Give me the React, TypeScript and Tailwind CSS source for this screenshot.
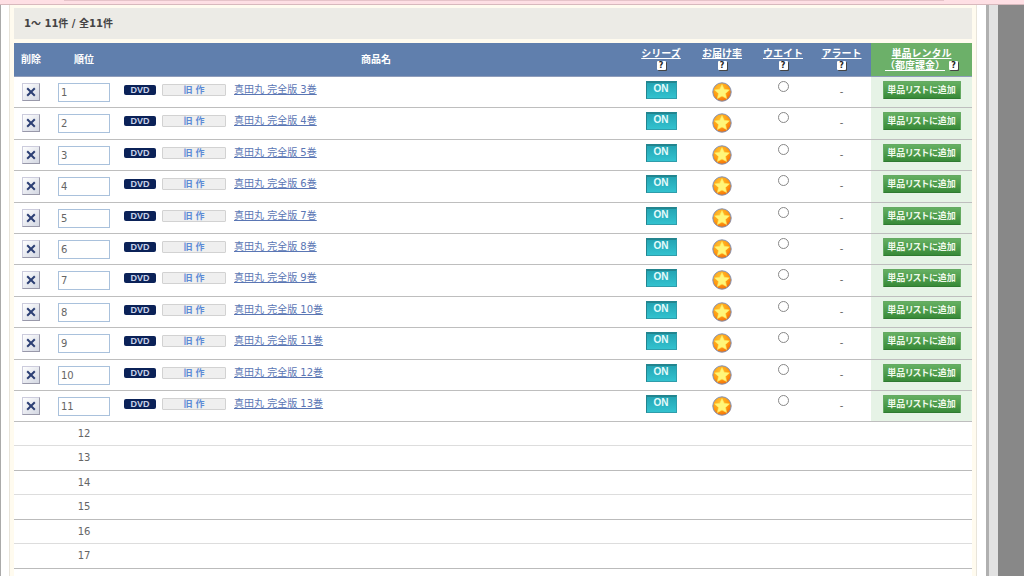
import type { ReactNode } from "react";

interface RentalItem {
  rank: number;
  title: string;
}

const items: RentalItem[] = Array.from({ length: 11 }, (_, i) => ({
  rank: i + 1,
  title: `真田丸 完全版 ${i + 3}巻`,
}));

const emptyRanks = [12, 13, 14, 15, 16, 17, 18];

export default function App() {
  return (
    <div className="flex h-screen flex-col overflow-hidden bg-white font-['DejaVu_Sans','Noto_Sans_CJK_JP',sans-serif] text-[10px] leading-3 text-[#666]">
      <div className="h-[5px] shrink-0 border-b border-[#d8b9bd] bg-[#fedfe4]">
        <div className="mr-20 ml-16 h-px bg-[#e6c3c9]" />
      </div>

      <div className="flex min-h-0 flex-1">
        <div className="min-w-0 flex-1 border-l border-[#aaa] pr-[9px] pl-2">
          <main className="h-full border-x border-[#e8e4da] bg-[#fffbef] px-1 pt-[3px]">
            <p className="mb-1 h-[31px] bg-[#ecebe6] px-[10px] font-bold leading-[31px] text-[#444]">
              1～ 11件 / 全11件
            </p>
            <RentalTable />
          </main>
        </div>
        <div className="w-[3px] bg-[#b0b0b0]" />
        <div className="w-[9px] bg-[#e2e2e2]" />
        <div className="w-[26px] bg-[#888]" />
      </div>
    </div>
  );
}

function RentalTable() {
  return (
    <table className="w-full table-fixed border-separate border-spacing-0 bg-white">
      <colgroup>
        <col className="w-[34px]" />
        <col className="w-[72px]" />
        <col />
        <col className="w-[58px]" />
        <col className="w-16" />
        <col className="w-[58px]" />
        <col className="w-[59px]" />
        <col className="w-[101px]" />
      </colgroup>
      <thead>
        <tr className="h-[34px] bg-[#607fad] text-white *:border-b *:border-[#8f9dbb] *:p-0">
          <th>削除</th>
          <th>順位</th>
          <th>商品名</th>
          <th><HelpHeading>シリーズ</HelpHeading></th>
          <th><HelpHeading>お届け率</HelpHeading></th>
          <th><HelpHeading>ウエイト</HelpHeading></th>
          <th><HelpHeading>アラート</HelpHeading></th>
          <th className="bg-[#6cb069]">
            <a href="#" className="block underline">単品レンタル</a>
            <span className="flex items-center justify-center gap-1">
              <a href="#" className="underline">（都度課金）</a>
              <HelpMark />
            </span>
          </th>
        </tr>
      </thead>
      <tbody>
        {items.map((item) => (
          <ItemRow key={item.rank} item={item} />
        ))}
      </tbody>
      <tbody>
        {emptyRanks.map((rank) => (
          <tr key={rank} className="h-[25px] text-center odd:h-6 *:border-b *:border-[#bbb] *:p-0 odd:*:border-[#ddd]">
            <td />
            <td>{rank}</td>
            <td colSpan={6} />
          </tr>
        ))}
      </tbody>
    </table>
  );
}

function ItemRow({ item }: { item: RentalItem }) {
  return (
    <tr className="h-[31px] text-center align-top nth-[5n+2]:h-8 nth-[5n+4]:h-8 *:border-b *:border-[#bebebe] *:p-0">
      <td>
        <button
          type="button"
          aria-label={`${item.title}を削除`}
          className="mx-auto mt-[6px] flex h-[18px] w-[18px] items-center justify-center border border-t-[#ccd] border-r-[#99a] border-b-[#99a] border-l-[#ccd] bg-linear-to-br from-white to-[#d3d7e2]"
        >
          <svg viewBox="0 0 10 10" className="h-[10px] w-[10px]" stroke="#2c3f74" strokeWidth="2">
            <path d="M1.2 1.2 8.8 8.8M8.8 1.2 1.2 8.8" />
          </svg>
        </button>
      </td>
      <td>
        <input
          type="text"
          aria-label={`${item.title}の順位`}
          defaultValue={item.rank}
          className="mx-auto mt-[6px] block h-[19px] w-[52px] border border-[#a9c1dc] bg-white px-[2px] text-[#666]"
        />
      </td>
      <td>
        <div className="flex h-[26px] items-start pt-1 pl-1">
          <div className="flex h-[18px] items-center">
            <span className="h-[10px] w-8 rounded-[2px] bg-[#0b2258] text-center font-['Liberation_Sans',sans-serif] text-[9px] font-bold leading-[10px] text-[#c9d3ea]">
              DVD
            </span>
            <span className="ml-[6px] h-3 w-16 rounded-[1px] border border-[#d2d2d2] bg-[#efefef] text-center text-[9px] font-bold leading-[10px] text-[#5d8bd6]">
              旧 作
            </span>
            <a href="#" className="ml-2 text-[#5a76b4] underline">
              {item.title}
            </a>
          </div>
        </div>
      </td>
      <td>
        <button
          type="button"
          className="mx-auto mt-1 block h-[18px] w-[31px] border border-t-2 border-[#2f9dab] border-t-[#23858f] border-l-[#23858f] bg-linear-to-b from-[#24a5b4] to-[#33c2cf] font-['Liberation_Sans',sans-serif] text-[10px] font-bold leading-3 text-[#e4fbfb]"
        >
          <span className="block h-[15px]">ON</span>
        </button>
      </td>
      <td>
        <StarIcon />
      </td>
      <td>
        <input
          type="radio"
          name="weight"
          aria-label={`${item.title}のウエイト`}
          className="mx-auto mt-1 block h-[11px] w-[11px] appearance-none rounded-full border border-[#888] bg-white"
        />
      </td>
      <td>
        <div className="pt-[9px]">-</div>
      </td>
      <td className="bg-[#e6f3e6]">
        <button
          type="button"
          className="mx-auto mt-1 block h-[18px] w-[78px] rounded-[1px] border border-[#65aa62] border-b-[#2f7a31] bg-linear-to-b from-[#65b062] to-[#388a38] text-[9px] font-bold leading-4 text-[#f0faec] [font-feature-settings:'palt']"
        >
          単品リストに追加
        </button>
      </td>
    </tr>
  );
}

function HelpHeading({ children }: { children: ReactNode }) {
  return (
    <>
      <a href="#" className="block whitespace-nowrap underline">{children}</a>
      <span className="flex h-3 items-center justify-center">
        <HelpMark />
      </span>
    </>
  );
}

function HelpMark() {
  return (
    <span className="block h-[9px] w-[9px] rounded-[1px] bg-white text-center text-[8px] font-bold leading-[9px] text-[#222] shadow-[1px_1px_0_#444]">
      ?
    </span>
  );
}

function StarIcon() {
  return (
    <svg viewBox="0 0 20 20" className="mx-auto mt-[5px] block h-5 w-5" role="img" aria-label="お届け率">
      <defs>
        <radialGradient id="star-disc" cx="0.4" cy="0.3" r="0.75">
          <stop offset="0" stopColor="#ffc233" />
          <stop offset="0.6" stopColor="#ff9a10" />
          <stop offset="1" stopColor="#f26a08" />
        </radialGradient>
      </defs>
      <circle cx="10" cy="10" r="9.2" fill="url(#star-disc)" stroke="#7f90b4" strokeWidth="1" />
      <path
        d="M10 2.6 12.2 7.3 17.4 7.9 13.5 11.4 14.6 16.6 10 14 5.4 16.6 6.5 11.4 2.6 7.9 7.8 7.3Z"
        fill="#fff67a"
        stroke="#ffe95a"
        strokeWidth="0.6"
        strokeLinejoin="round"
      />
    </svg>
  );
}
